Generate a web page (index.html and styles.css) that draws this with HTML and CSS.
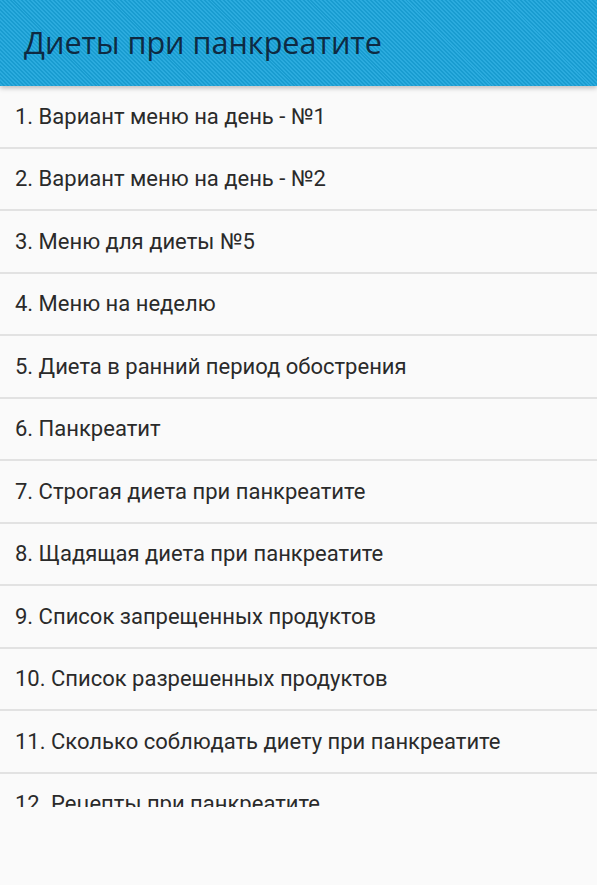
FILE: index.html
```html
<!DOCTYPE html>
<html lang="ru">
<head>
<meta charset="utf-8">
<link rel="stylesheet" href="styles.css">
</head>
<body>
<header class="bar"><h1 class="title">Диеты при панкреатите</h1></header>
<main class="list">
  <div class="item">1. Вариант меню на день - №1</div>
  <div class="item">2. Вариант меню на день - №2</div>
  <div class="item">3. Меню для диеты №5</div>
  <div class="item">4. Меню на неделю</div>
  <div class="item">5. Диета в ранний период обострения</div>
  <div class="item">6. Панкреатит</div>
  <div class="item">7. Строгая диета при панкреатите</div>
  <div class="item">8. Щадящая диета при панкреатите</div>
  <div class="item">9. Список запрещенных продуктов</div>
  <div class="item">10. Список разрешенных продуктов</div>
  <div class="item">11. Сколько соблюдать диету при панкреатите</div>
  <div class="item">12. Рецепты при панкреатите</div>
</main>
</body>
</html>
```
FILE: styles.css
```css
html, body {
  margin: 0;
  padding: 0;
  background: #fafafa;
  height: 885px;
  overflow: hidden;
}
body {
  font-family: Roboto, "Noto Sans", sans-serif;
}
.bar {
  position: relative;
  z-index: 1;
  height: 86px;
  display: flex;
  align-items: center;
  padding-left: 24px;
  background-color: #1ea6d8;
  background-image: repeating-linear-gradient(45deg, #199cd0 0px, #199cd0 1.4px, #2babde 1.4px, #2babde 2.8px);
  box-shadow: 0 2px 5px rgba(0, 0, 0, 0.25);
}
.title {
  margin: 0;
  font-family: "Open Sans", "Noto Sans", sans-serif;
  font-weight: 400;
  font-size: 30.6px;
  color: #0e2a42;
  padding-bottom: 2px;
}
.list {
  height: 721px;
  overflow: hidden;
}
.item {
  height: 60.5px;
  border-bottom: 2px solid #e2e2e2;
  display: flex;
  align-items: center;
  padding-left: 15px;
  font-size: 22px;
  color: #2a2a2a;
}
```
